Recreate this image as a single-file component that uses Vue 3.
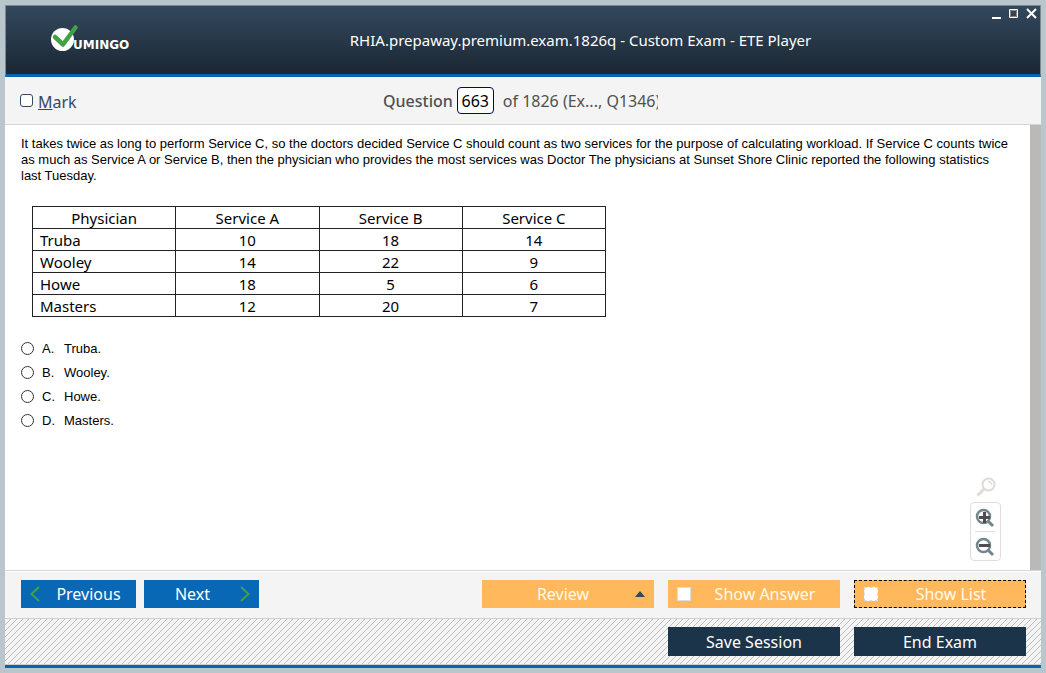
<script setup>
import { ref } from 'vue'

const headers = ['Physician', 'Service A', 'Service B', 'Service C']
const rows = [
  ['Truba', 10, 18, 14],
  ['Wooley', 14, 22, 9],
  ['Howe', 18, 5, 6],
  ['Masters', 12, 20, 7],
]
const options = [
  { id: 'A', text: 'Truba.' },
  { id: 'B', text: 'Wooley.' },
  { id: 'C', text: 'Howe.' },
  { id: 'D', text: 'Masters.' },
]
const number = ref('663')
const marked = ref(false)
const answer = ref('')
const showAnswer = ref(false)
const showList = ref(false)
</script>

<template>
  <div class="desktop">
    <div class="window">
      <header class="titlebar">
        <svg class="logo" viewBox="0 0 82 30" role="img" aria-label="Vumingo">
          <circle cx="11.5" cy="16.5" r="11.5" fill="#fff" />
          <path d="M4 14 L12 21.500 L24.500 4.500" fill="none" stroke="#43a047" stroke-width="4.5" stroke-linecap="round" stroke-linejoin="round" />
          <text x="22" y="26" class="logo-text">UMINGO</text>
        </svg>
        <h1 class="title">RHIA.prepaway.premium.exam.1826q - Custom Exam - ETE Player</h1>
        <div class="controls">
          <button type="button" aria-label="Minimize"><svg viewBox="0 0 11 11"><path d="M2 10h9" stroke="#fff" stroke-width="2" /></svg></button>
          <button type="button" aria-label="Maximize"><svg viewBox="0 0 11 11"><path d="M1.5 1.5h8v8h-8z" fill="none" stroke="#fff" /><path d="M2.5 2.5h6v6h-6z" fill="none" stroke="#8a8580" /></svg></button>
          <button type="button" aria-label="Close"><svg viewBox="0 0 11 11"><path d="M1 1l9 9M10 1l-9 9" stroke="#fff" stroke-width="2" /></svg></button>
        </div>
      </header>

      <div class="infobar">
        <label class="mark"><input v-model="marked" type="checkbox" /><span><u>M</u>ark</span></label>
        <div class="counter">
          <label for="qnum">Question</label>
          <input id="qnum" v-model="number" type="text" />
          <span class="total">of 1826 (Ex..., Q1346)</span>
        </div>
      </div>

      <main class="content">
        <div class="page">
          <p class="question">It takes twice as long to perform Service C, so the doctors decided Service C should count as two services for the purpose of calculating workload. If Service C counts twice as much as Service A or Service B, then the physician who provides the most services was Doctor The physicians at Sunset Shore Clinic reported the following statistics last Tuesday.</p>
          <table>
            <thead>
              <tr><th v-for="h in headers" :key="h" scope="col">{{ h }}</th></tr>
            </thead>
            <tbody>
              <tr v-for="r in rows" :key="r[0]"><td v-for="(c, i) in r" :key="i">{{ c }}</td></tr>
            </tbody>
          </table>
          <div class="options" role="radiogroup" aria-label="Answers">
            <label v-for="o in options" :key="o.id" class="option">
              <input v-model="answer" type="radio" name="answer" :value="o.id" />
              <span class="letter">{{ o.id }}.</span>
              <span>{{ o.text }}</span>
            </label>
          </div>
        </div>
        <div class="scrollbar"></div>
        <div class="zoom">
          <svg class="glass" viewBox="0 0 20 20"><circle cx="12.5" cy="7.5" r="6" fill="none" stroke="#e0d9d9" stroke-width="2" /><path d="M12 4.5a3.5 3.5 0 0 1 3.5 3.5" fill="none" stroke="#e0d9d9" stroke-width="1.5" /><path d="M8 12l-6.500 6.500" stroke="#e0d9d9" stroke-width="3" /></svg>
          <div class="zoombox">
            <button type="button" aria-label="Zoom in"><svg viewBox="0 0 20 20"><circle cx="8.500" cy="8.500" r="6.500" fill="none" stroke="#74858b" stroke-width="2.500" /><path d="M13.500 13.500l4.500 4.500" stroke="#74858b" stroke-width="3" /><path d="M9.500 4v11M4 9.500h11" stroke="#514c50" stroke-width="3" /></svg></button>
            <button type="button" aria-label="Zoom out"><svg viewBox="0 0 20 20"><circle cx="8.500" cy="8.500" r="6.500" fill="none" stroke="#74858b" stroke-width="2.500" /><path d="M13.500 13.500l4.500 4.500" stroke="#74858b" stroke-width="3" /><path d="M4 8.500h11" stroke="#514c50" stroke-width="3" /></svg></button>
          </div>
        </div>
      </main>

      <nav class="actions">
        <button type="button" class="btn blue prev">
          <svg viewBox="0 0 10 16"><path d="M9 1L1.500 8L9 15" /></svg><span>Previous</span>
        </button>
        <button type="button" class="btn blue next">
          <span>Next</span><svg viewBox="0 0 10 16"><path d="M1 1l7.500 7L1 15" /></svg>
        </button>
        <button type="button" class="btn orange review">
          <span>Review</span><svg viewBox="0 0 10 6"><path d="M0 6L5 0l5 6z" fill="#34495e" /></svg>
        </button>
        <label class="btn orange"><input v-model="showAnswer" type="checkbox" /><span>Show Answer</span></label>
        <label class="btn orange focused"><input v-model="showList" type="checkbox" /><span>Show List</span></label>
      </nav>

      <footer class="session">
        <svg class="hatch" aria-hidden="true">
          <defs>
            <pattern id="hatch" width="6" height="6" patternUnits="userSpaceOnUse">
              <path d="M5 0h1v1h-1zM4 1h1v1h-1zM3 2h1v1h-1zM2 3h1v1h-1zM1 4h1v1h-1zM0 5h1v1h-1z" fill="#bcbcbc" />
            </pattern>
          </defs>
          <rect width="100%" height="100%" fill="url(#hatch)" />
        </svg>
        <button type="button" class="btn dark">Save Session</button>
        <button type="button" class="btn dark">End Exam</button>
      </footer>
    </div>
  </div>
</template>

<style>
body {
  margin: 0;
}
</style>

<style scoped>
.desktop {
  box-sizing: border-box;
  min-height: 100vh;
  padding: 5px;
  background: #b9c6cc;
  display: flex;
  font-family: "Noto Sans", "Open Sans", sans-serif;
  color: #34495e;
}
.window {
  flex: 1;
  min-width: 0;
  display: flex;
  flex-direction: column;
  background: #f4f4f4;
  border-bottom: 3px solid #0763b3;
}
button {
  font: inherit;
  cursor: pointer;
}
.titlebar {
  box-sizing: border-box;
  height: 72px;
  display: grid;
  grid-template-columns: 150px 1fr 80px;
  align-items: center;
  padding-left: 45px;
  border: 1px solid #7b8a91;
  border-bottom: 3px solid #0763b3;
  background: linear-gradient(#34495e, #1a2733);
}
.logo {
  width: 82px;
  height: 30px;
  margin-bottom: 4px;
}
.logo-text {
  font: bold 12px "DejaVu Sans", sans-serif;
  fill: #fff;
}
.title {
  margin: 0;
  text-align: center;
  color: #fff;
  font-size: 15px;
  font-weight: 400;
  line-height: 20px;
  white-space: nowrap;
}
.controls {
  align-self: start;
  display: flex;
  justify-content: flex-end;
  gap: 7px;
  padding: 2px 3px;
}
.controls button {
  width: 11px;
  height: 11px;
  padding: 0;
  border: 0;
  background: none;
}
.controls svg,
.zoombox svg {
  display: block;
}
.infobar {
  box-sizing: border-box;
  height: 48px;
  display: flex;
  align-items: center;
  padding-left: 15px;
  border-bottom: 1px solid #d6d6d6;
  font-size: 16px;
}
.mark {
  width: 363px;
  display: flex;
  align-items: center;
  gap: 5px;
}
.mark span {
  padding-top: 2px;
}
.mark input {
  appearance: none;
  box-sizing: border-box;
  width: 13px;
  height: 13px;
  margin: 0;
  border: 1px solid #34495e;
  border-radius: 3px;
  background: #fff;
}
.counter {
  display: flex;
  align-items: center;
  color: #505050;
}
.counter label {
  font-weight: 500;
}
.counter input {
  box-sizing: border-box;
  width: 37px;
  height: 27px;
  margin: 0 9px 0 4px;
  padding: 0;
  border: 1px solid #000080;
  border-radius: 4px;
  background: #fff;
  color: #000;
  font: inherit;
  text-align: center;
}
.total {
  width: 155px;
  overflow: hidden;
  white-space: nowrap;
}
.content {
  flex: 1;
  position: relative;
  display: flex;
  background: #fff;
  border-bottom: 1px solid #d6d6d6;
}
.page {
  flex: 1;
  min-width: 0;
  padding: 11px 20px 11px 16px;
  color: #000;
  font: 13px/16px "Liberation Sans", Arial, sans-serif;
}
.question {
  margin: 0 0 22px;
}
table {
  border-collapse: collapse;
  table-layout: fixed;
  width: 574px;
  margin-left: 11px;
  font: 15px/20px "Noto Sans", sans-serif;
}
th,
td {
  padding: 1px 7px 0;
  border: 1px solid #222;
  font-weight: 400;
  text-align: center;
}
td:first-child {
  text-align: left;
}
.options {
  margin-top: 24px;
  display: flex;
  flex-direction: column;
  gap: 8px;
}
.option {
  display: flex;
  align-items: center;
}
.option input {
  appearance: none;
  box-sizing: border-box;
  width: 13px;
  height: 13px;
  margin: 0 8px 1px 0;
  border: 1px solid #333;
  border-radius: 50%;
}
.letter {
  width: 22px;
}
.scrollbar {
  width: 11px;
  background: #bbb9b7;
}
.zoom {
  position: absolute;
  right: 40px;
  bottom: 9px;
  display: flex;
  flex-direction: column;
  align-items: center;
  gap: 5px;
}
.glass {
  width: 20px;
  height: 20px;
}
.zoombox {
  display: flex;
  flex-direction: column;
  padding: 0 5px 0 4px;
  border: 1px solid #e4dcdc;
  border-radius: 4px;
}
.zoombox button {
  box-sizing: border-box;
  height: 28px;
  padding: 5px 0 3px;
  border: 0;
  background: none;
}
.zoombox button + button {
  height: 29px;
  border-top: 1px solid #dcdcdc;
}
.zoombox svg {
  width: 20px;
  height: 20px;
}
.actions {
  box-sizing: border-box;
  height: 48px;
  display: flex;
  align-items: center;
  gap: 14px;
  padding: 0 15px 2px 16px;
  border-top: 1px solid #fff;
  border-bottom: 1px solid #cfcfcf;
}
.btn {
  box-sizing: border-box;
  width: 172px;
  height: 28px;
  display: flex;
  align-items: center;
  justify-content: center;
  padding: 0 9px;
  border: 0;
  font-size: 16px;
  line-height: 30px;
  color: #fff;
}
.btn span {
  flex: 1;
  text-align: center;
}
.blue {
  width: 115px;
  background: #0968b5;
}
.blue svg {
  width: 10px;
  height: 16px;
  fill: none;
  stroke: #43a047;
  stroke-width: 2;
}
.prev {
  margin-right: -6px;
}
.prev span {
  padding-left: 10px;
}
.next span {
  padding-right: 8px;
}
.orange {
  background: #ffb85c;
  color: #fffbea;
}
.orange input {
  appearance: none;
  box-sizing: border-box;
  width: 14px;
  height: 14px;
  margin: 0;
  border: 1px solid #ddd;
  background: #fff;
}
.orange input + span {
  padding-left: 8px;
}
.review {
  margin-left: auto;
}
.review svg {
  width: 10px;
  height: 6px;
}
.focused {
  border: 1px dashed #000;
}
.focused input {
  border-style: dashed;
}
.session {
  box-sizing: border-box;
  position: relative;
  height: 46px;
  display: flex;
  align-items: center;
  justify-content: flex-end;
  gap: 14px;
  padding: 0 15px 0 16px;
  border-bottom: 1px solid #cfcfcf;
}
.hatch {
  position: absolute;
  inset: 0;
  width: 100%;
  height: 100%;
  shape-rendering: crispEdges;
}
.dark {
  position: relative;
  height: 29px;
  background: #1b344a;
}
</style>
